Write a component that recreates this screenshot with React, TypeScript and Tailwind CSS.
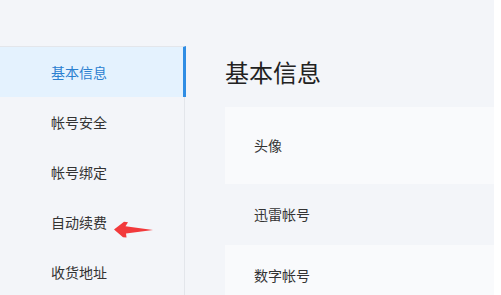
import * as React from "react";

const menu = ["基本信息", "帐号安全", "帐号绑定", "自动续费", "收货地址"];

const rows = [
  { label: "头像", h: "h-[77px]", bg: "bg-[#f9fafc]" },
  { label: "迅雷帐号", h: "h-[61px]", bg: "bg-[#f3f5f9]" },
  { label: "数字帐号", h: "h-[61px]", bg: "bg-[#f9fafc]" },
];

function Arrow() {
  return (
    <svg width="42" height="18" viewBox="0 0 42 18" className="absolute left-[113px] top-[24px]">
      <path d="M1 8.5 L11 0.8 L15 1.2 L12.5 5.2 L40 9 L13 12.5 L13.5 16.5 L10 16.2 Z" fill="#f23a3c" />
    </svg>
  );
}

export default function App() {
  return (
    <div
      className="w-[501px] h-[295px] overflow-hidden bg-white flex"
      style={{ fontFamily: '"Noto Sans CJK SC", "Noto Sans", sans-serif' }}
    >
      <div className="w-[494px] h-full bg-[#f3f5f9] flex pt-[46px]">
        <nav className="w-[186px] shrink-0 flex flex-col">
          {menu.map((item, i) =>
            i === 0 ? (
              <div
                key={item}
                className="shrink-0 w-[186px] h-[51px] border-t border-[#e3e6eb] border-r-[3px] border-r-[#2f8de4] bg-[#e4f2fe] text-[#2b80d0] text-[14px] flex items-center pl-[51px]"
              >
                {item}
              </div>
            ) : (
              <div
                key={item}
                className="shrink-0 relative w-[185px] h-[50px] border-r border-[#e3e6eb] text-[#333] text-[14px] flex items-center pl-[51px]"
              >
                {item}
                {item === "自动续费" && <Arrow />}
              </div>
            )
          )}
        </nav>
        <main className="flex-1 pl-[39px] flex flex-col">
          <h1 className="shrink-0 h-[51px] flex items-center text-[24px] text-[#222] font-normal">基本信息</h1>
          <div className="shrink-0 mt-[10px] flex flex-col">
            {rows.map((r) => (
              <div key={r.label} className={`shrink-0 ${r.h} ${r.bg} flex items-center pl-[29px] text-[14px] text-[#333]`}>
                {r.label}
              </div>
            ))}
          </div>
        </main>
      </div>
    </div>
  );
}
